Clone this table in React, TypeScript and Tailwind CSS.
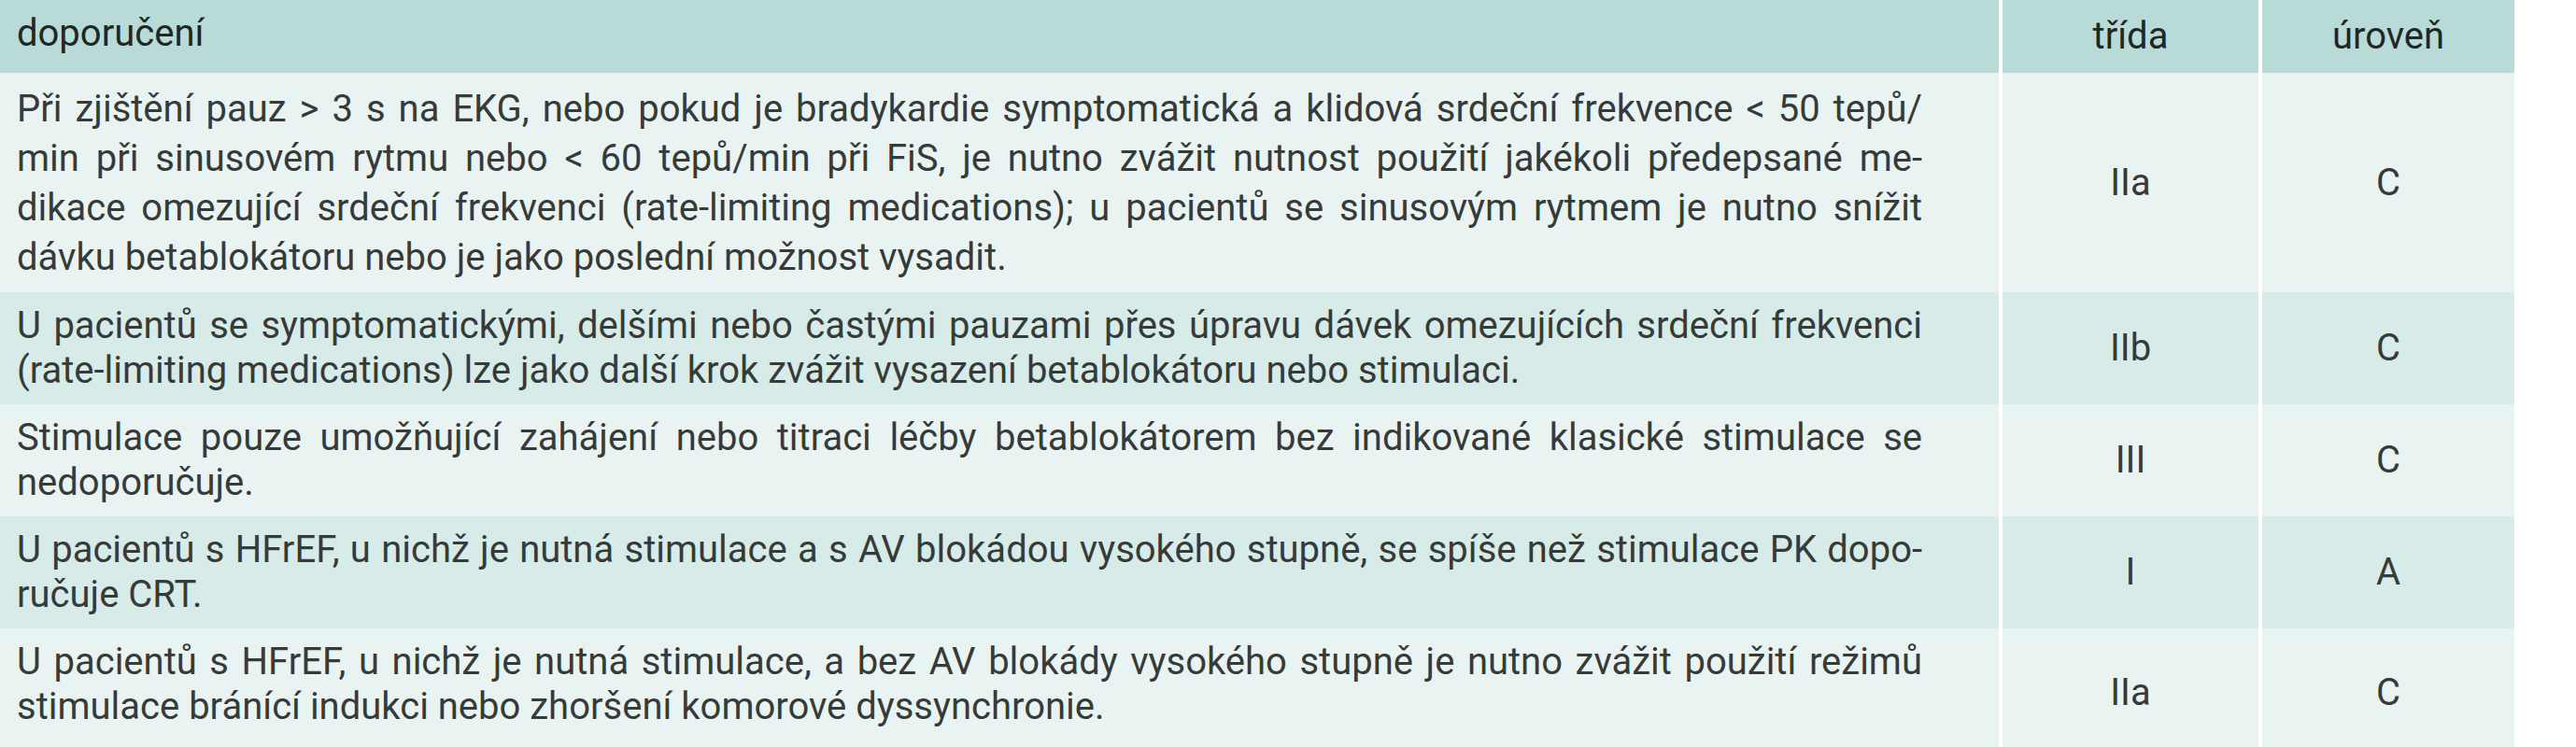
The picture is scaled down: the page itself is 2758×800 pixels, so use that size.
import React from "react";

type Row = {
  lines: string[];
  cls: string;
  level: string;
  tone: "light" | "dark";
  tall?: boolean;
  last?: boolean;
};

const ROWS: Row[] = [
  {
    lines: [
      "Při zjištění pauz > 3 s na EKG, nebo pokud je bradykardie symptomatická a klidová srdeční frekvence < 50 tepů/",
      "min při sinusovém rytmu nebo < 60 tepů/min při FiS, je nutno zvážit nutnost použití jakékoli předepsané me-",
      "dikace omezující srdeční frekvenci (rate-limiting medications); u pacientů se sinusovým rytmem je nutno snížit",
      "dávku betablokátoru nebo je jako poslední možnost vysadit.",
    ],
    cls: "IIa",
    level: "C",
    tone: "light",
    tall: true,
  },
  {
    lines: [
      "U pacientů se symptomatickými, delšími nebo častými pauzami přes úpravu dávek omezujících srdeční frekvenci",
      "(rate-limiting medications) lze jako další krok zvážit vysazení betablokátoru nebo stimulaci.",
    ],
    cls: "IIb",
    level: "C",
    tone: "dark",
  },
  {
    lines: [
      "Stimulace pouze umožňující zahájení nebo titraci léčby betablokátorem bez indikované klasické stimulace se",
      "nedoporučuje.",
    ],
    cls: "III",
    level: "C",
    tone: "light",
  },
  {
    lines: [
      "U pacientů s HFrEF, u nichž je nutná stimulace a s AV blokádou vysokého stupně, se spíše než stimulace PK dopo-",
      "ručuje CRT.",
    ],
    cls: "I",
    level: "A",
    tone: "dark",
  },
  {
    lines: [
      "U pacientů s HFrEF, u nichž je nutná stimulace, a bez AV blokády vysokého stupně je nutno zvážit použití režimů",
      "stimulace bránící indukci nebo zhoršení komorové dyssynchronie.",
    ],
    cls: "IIa",
    level: "C",
    tone: "light",
    last: true,
  },
];

function Cell({ tone, children, className = "" }: { tone: "light" | "dark"; children: React.ReactNode; className?: string }) {
  return (
    <div className={`${tone === "light" ? "bg-[#e9f4f2]" : "bg-[#d7ebe8]"} ${className}`}>
      {children}
    </div>
  );
}

export default function App() {
  return (
    <div className="w-[2758px] h-[800px] overflow-hidden bg-white font-['Roboto',sans-serif] text-[40px]">
      <div className="w-[2692px] grid grid-cols-[2140px_274px_270px] gap-x-1 bg-white">
        {/* header */}
        <div className="bg-[#b8dbd8] pl-[18px] pt-[12px] pb-[18px] leading-[48px] text-[#1e2826]">doporučení</div>
        <div className="bg-[#b8dbd8] flex items-center justify-center leading-[48px] text-[#1e2826]">třída</div>
        <div className="bg-[#b8dbd8] flex items-center justify-center leading-[48px] text-[#1e2826]">úroveň</div>

        {ROWS.map((row, i) => (
          <React.Fragment key={i}>
            <Cell
              tone={row.tone}
              className={`pl-[18px] pr-[82px] pt-[12px] text-[#363b3a] ${row.tall ? "leading-[53px] pb-[11px]" : "leading-[48px] pb-[12px]"} ${row.last ? "pb-[30px]" : ""}`}
            >
              {row.lines.map((line, j) => (
                <div
                  key={j}
                  className={`whitespace-nowrap ${j < row.lines.length - 1 ? "text-justify [text-align-last:justify]" : ""}`}
                >
                  {line}
                </div>
              ))}
            </Cell>
            <Cell tone={row.tone} className="flex items-center justify-center text-[#363b3a]">
              {row.cls}
            </Cell>
            <Cell tone={row.tone} className="flex items-center justify-center text-[#363b3a]">
              {row.level}
            </Cell>
          </React.Fragment>
        ))}
      </div>
    </div>
  );
}
